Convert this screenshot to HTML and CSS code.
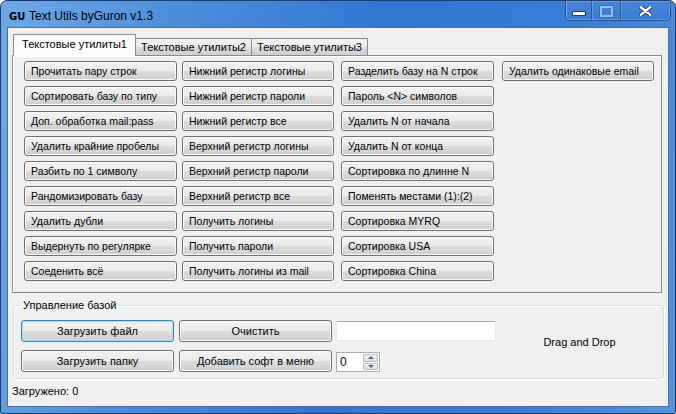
FILE: index.html
```html
<!DOCTYPE html>
<html lang="ru">
<head>
  <meta charset="UTF-8">
  <title>GU Text Utils byGuron v1.3</title>
  <link rel="stylesheet" href="styles.css">
</head>
<body>
  <div class="window">

    <!-- title bar -->
    <div class="titlebar">
      <span class="app-icon">GU</span>
      <span class="title">Text Utils byGuron v1.3</span>
      <div class="caption-btns">
        <span class="cb min"><i></i></span>
        <span class="cb max"><i></i></span>
        <span class="cb close">
          <svg width="13" height="10" viewBox="0 0 13 10">
            <path d="M1.5 1 L11.5 9 M11.5 1 L1.5 9" stroke="#1d3a66" stroke-width="4.2" stroke-linecap="round"/>
            <path d="M1.8 1.2 L11.2 8.8 M11.2 1.2 L1.8 8.8" stroke="#ffffff" stroke-width="2.4" stroke-linecap="round"/>
          </svg>
        </span>
      </div>
    </div>

    <div class="client">

      <!-- tabs -->
      <div class="tabs">
        <div class="tab active">Текстовые утилиты1</div>
        <div class="tab">Текстовые утилиты2</div>
        <div class="tab">Текстовые утилиты3</div>
      </div>

      <div class="tab-page">
        <div class="col">
          <button class="btn">Прочитать пару строк</button>
          <button class="btn">Сортировать базу по типу</button>
          <button class="btn">Доп. обработка mail:pass</button>
          <button class="btn">Удалить крайние пробелы</button>
          <button class="btn">Разбить по 1 символу</button>
          <button class="btn">Рандомизировать базу</button>
          <button class="btn">Удалить дубли</button>
          <button class="btn">Выдернуть по регулярке</button>
          <button class="btn">Соеденить всё</button>
        </div>
        <div class="col col2">
          <button class="btn">Нижний регистр логины</button>
          <button class="btn">Нижний регистр пароли</button>
          <button class="btn">Нижний регистр все</button>
          <button class="btn">Верхний регистр логины</button>
          <button class="btn">Верхний регистр пароли</button>
          <button class="btn">Верхний регистр все</button>
          <button class="btn">Получить логины</button>
          <button class="btn">Получить пароли</button>
          <button class="btn">Получить логины из mail</button>
        </div>
        <div class="col col3">
          <button class="btn">Разделить базу на N строк</button>
          <button class="btn">Пароль &lt;N&gt; символов</button>
          <button class="btn">Удалить N от начала</button>
          <button class="btn">Удалить N от конца</button>
          <button class="btn">Сортировка по длинне N</button>
          <button class="btn">Поменять местами (1):(2)</button>
          <button class="btn">Сортировка MYRQ</button>
          <button class="btn">Сортировка USA</button>
          <button class="btn">Сортировка China</button>
        </div>
        <div class="col col4">
          <button class="btn">Удалить одинаковые email</button>
        </div>
      </div>

      <!-- group box -->
      <div class="group">
        <span class="group-title">Управление базой</span>
        <div class="group-grid">
          <button class="btn wide focused">Загрузить файл</button>
          <button class="btn wide">Очистить</button>
          <input class="textbox" type="text">
          <button class="btn wide">Загрузить папку</button>
          <button class="btn wide">Добавить софт в меню</button>
          <div class="numeric">
            <span class="num-val">0</span>
            <span class="spin">
              <span class="spin-up"></span>
              <span class="spin-down"></span>
            </span>
          </div>
        </div>
        <div class="drop-zone">Drag and Drop</div>
      </div>

      <div class="status">Загружено: 0</div>
    </div>
  </div>
</body>
</html>
```

FILE: styles.css
```css
/* page */
html, body { margin: 0; padding: 0; }
body {
  width: 676px;
  height: 414px;
  overflow: hidden;
  background: #ffffff;
  font-family: "Liberation Sans", Arial, sans-serif;
  font-size: 11px;
  color: #000;
}

/* window frame */
.window {
  box-sizing: border-box;
  width: 676px;
  height: 414px;
  padding: 0 6px 6px 6px;
  border: 1px solid #1f3b63;
  border-radius: 7px 7px 2px 2px;
  background: linear-gradient(100deg, #6fa9e7 0%, #4e8fdc 22%, #3176d4 52%, #387dd7 78%, #5693dd 100%);
  display: flex;
  flex-direction: column;
}

/* title bar */
.titlebar {
  height: 26px;
  margin: 0 -6px;
  padding: 0 4px 0 8px;
  display: flex;
  align-items: center;
}
.app-icon {
  font-family: "DejaVu Sans", Verdana, sans-serif;
  font-weight: bold;
  font-size: 10px;
  margin-top: 4px;
  width: 20px;
}
.title {
  font-size: 12px;
  margin-top: 4px;
}
.caption-btns {
  margin-left: auto;
  align-self: flex-start;
  display: flex;
  height: 19px;
  border: 1px solid #2a4e80;
  border-top: none;
  border-radius: 0 0 5px 5px;
  box-shadow: inset 0 0 0 1px rgba(255,255,255,0.2);
  background: linear-gradient(#4585d8, #3b7cd4);
  overflow: hidden;
}
.cb {
  display: flex;
  align-items: center;
  justify-content: center;
  height: 19px;
  width: 25px;
  border-right: 1px solid rgba(30,60,110,0.6);
  box-shadow: inset 1px 0 0 rgba(255,255,255,0.2);
}
.cb.max { width: 28px; }
.cb.close { width: 49px; border-right: none; }
.cb.min i {
  width: 12px;
  height: 3px;
  margin-top: 6px;
  background: #fff;
  border: 1px solid #1d3a66;
  border-radius: 1px;
}
.cb.max i {
  width: 9px;
  height: 7px;
  margin-top: 1px;
  border: 2px solid #9dbde9;
  outline: 1px solid rgba(40,80,140,0.4);
}
.cb.close svg { margin-top: 1px; }

/* client area */
.client {
  flex: 1;
  background: #f0f0f0;
  border: 1px solid #4d6f9c;
  display: flex;
  flex-direction: column;
}

/* tabs */
.tabs {
  display: flex;
  align-items: flex-end;
  height: 20px;
  margin: 7px 0 0 5px;
}
.tab {
  box-sizing: border-box;
  width: 117px;
  height: 17px;
  margin-left: -1px;
  border: 1px solid #898c95;
  border-bottom: none;
  background: linear-gradient(#f3f3f3, #ebebeb 50%, #dddddd 50%, #cfcfcf);
  font-size: 11px;
  text-align: center;
  line-height: 16px;
}
.tab.active {
  width: 123px;
  height: 22px;
  margin: 0 0 -1px 0;
  background: #fcfcfc;
  line-height: 19px;
  position: relative;
  z-index: 1;
}

/* tab page with tool buttons */
.tab-page {
  box-sizing: border-box;
  height: 238px;
  margin: 0 6px 0 4px;
  padding: 5px 0 0 11px;
  border: 1px solid #898c95;
  box-shadow: inset 1px 1px 0 #ffffff;
  display: flex;
}
.col {
  display: flex;
  flex-direction: column;
  gap: 5px;
  width: 153px;
}
.col2 { margin-left: 5px; width: 152px; }
.col3 { margin-left: 7px; }
.col4 { margin-left: 8px; width: 152px; }

/* buttons */
.btn {
  box-sizing: border-box;
  height: 20px;
  padding: 0 0 0 6px;
  font-family: "Liberation Sans", Arial, sans-serif;
  font-size: 10.5px;
  color: #000;
  text-align: left;
  white-space: nowrap;
  border: 1px solid #707070;
  border-radius: 3px;
  background: linear-gradient(#f2f2f2, #ebebeb 50%, #dddddd 50%, #cfcfcf);
  box-shadow: inset 0 0 0 1px #fbfbfb;
}
.btn.wide {
  width: 153px;
  height: 22px;
  font-size: 11px;
  text-align: center;
  padding: 0;
}
.btn.focused {
  border-color: #3c7fb1;
  box-shadow: inset 0 0 0 1px #a8dcf5;
}

/* group box */
.group {
  position: relative;
  box-sizing: border-box;
  height: 74px;
  margin: 12px 4px 0 5px;
  padding: 14px 0 0 7px;
  border: 1px solid #d5dfe5;
  border-radius: 3px;
  box-shadow: inset 1px 1px 0 #fff, 1px 1px 0 #fff;
  display: flex;
}
.group-title {
  position: absolute;
  top: -8px;
  left: 7px;
  padding: 0 2px;
  background: #f0f0f0;
  font-size: 11px;
  line-height: 14px;
}
.group-grid {
  display: grid;
  grid-template-columns: 153px 152px 160px;
  grid-template-rows: 22px 22px;
  column-gap: 5px;
  row-gap: 8px;
}
.textbox {
  box-sizing: border-box;
  width: 160px;
  height: 20px;
  margin: 1px 0 0 0;
  padding: 0;
  background: #fff;
  border: 1px solid #e3e9ef;
  border-top-color: #abadb3;
}
.numeric {
  box-sizing: border-box;
  width: 44px;
  height: 20px;
  margin-top: 2px;
  border: 1px solid #abadb3;
  background: #fff;
  display: flex;
  justify-content: space-between;
}
.num-val {
  padding: 1px 0 0 3px;
  font-size: 12px;
  line-height: 16px;
}
.spin {
  display: flex;
  flex-direction: column;
  width: 15px;
  margin: 1px 1px 1px 0;
  gap: 1px;
}
.spin-up, .spin-down {
  flex: 1;
  border: 1px solid #b6bcc6;
  border-radius: 1px;
  background: linear-gradient(#f4f4f4, #dcdcdc);
  display: flex;
  align-items: center;
  justify-content: center;
}
.spin-up::after {
  content: "";
  border: 3px solid transparent;
  border-top: none;
  border-bottom: 3px solid #4d6185;
}
.spin-down::after {
  content: "";
  border: 3px solid transparent;
  border-bottom: none;
  border-top: 3px solid #4d6185;
}
.drop-zone {
  flex: 1;
  display: flex;
  align-items: center;
  justify-content: center;
  margin-top: -14px;
  font-size: 11px;
}

/* status line */
.status {
  margin: 5px 0 0 4px;
  line-height: 14px;
}
```
